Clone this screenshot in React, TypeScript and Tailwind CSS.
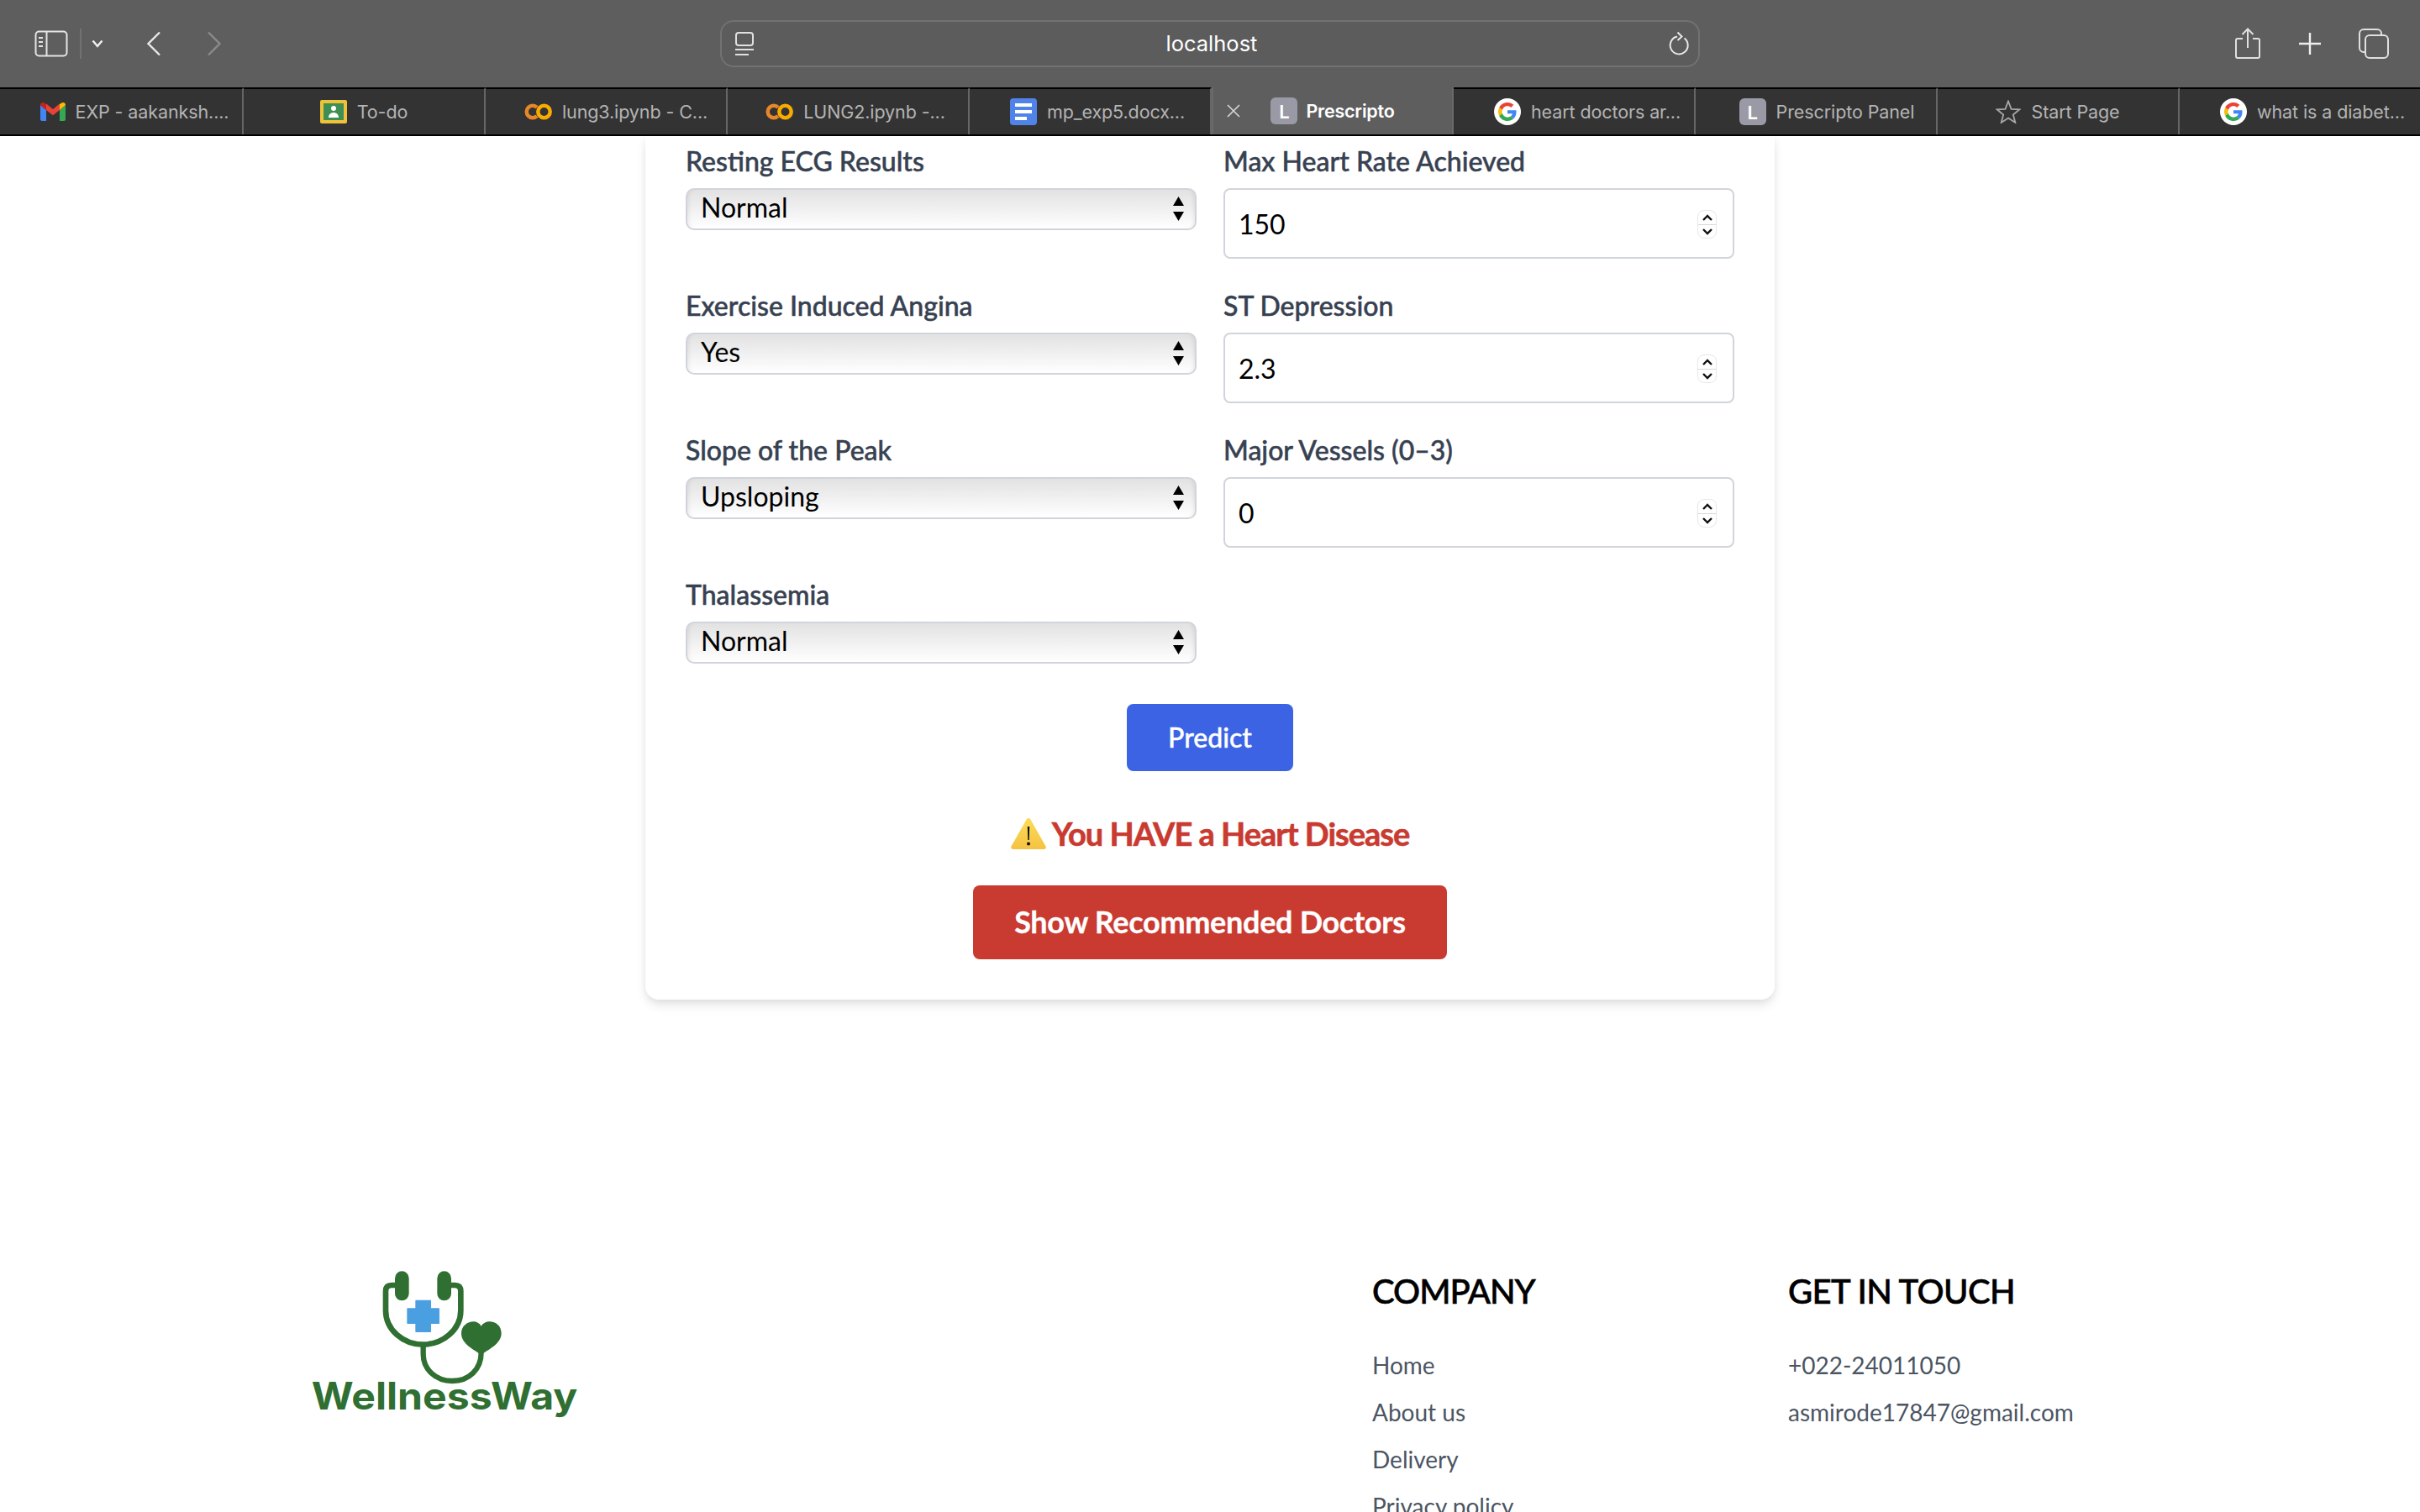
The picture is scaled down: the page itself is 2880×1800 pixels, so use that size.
import React from "react";

const bodyFont = "font-['Lato','Noto_Sans',sans-serif]";

function GoogleIcon() {
  return (
    <span className="flex h-[32px] w-[32px] shrink-0 items-center justify-center rounded-full bg-white">
      <svg viewBox="0 0 48 48" className="h-[22px] w-[22px]">
        <path fill="#EA4335" d="M24 9.5c3.54 0 6.71 1.22 9.21 3.6l6.85-6.85C35.9 2.38 30.47 0 24 0 14.62 0 6.51 5.38 2.56 13.22l7.98 6.19C12.43 13.72 17.74 9.5 24 9.5z" />
        <path fill="#4285F4" d="M46.98 24.55c0-1.57-.15-3.09-.38-4.55H24v9.02h12.94c-.58 2.96-2.26 5.48-4.78 7.18l7.73 6c4.51-4.18 7.09-10.36 7.09-17.65z" />
        <path fill="#FBBC05" d="M10.53 28.59c-.48-1.45-.76-2.99-.76-4.59s.27-3.14.76-4.59l-7.98-6.19C.92 16.46 0 20.12 0 24c0 3.88.92 7.54 2.56 10.78l7.97-6.19z" />
        <path fill="#34A853" d="M24 48c6.48 0 11.93-2.13 15.89-5.81l-7.73-6c-2.15 1.45-4.92 2.3-8.16 2.3-6.26 0-11.57-4.22-13.47-9.91l-7.98 6.19C6.51 42.62 14.62 48 24 48z" />
      </svg>
    </span>
  );
}

function GmailIcon() {
  return (
    <svg viewBox="0 0 30 22" className="h-[22px] w-[30px] shrink-0">
      <path fill="#4285F4" d="M0 3v17a2 2 0 0 0 2 2h5V9z" />
      <path fill="#34A853" d="M30 3v17a2 2 0 0 1-2 2h-5V9z" />
      <path fill="#EA4335" d="M7 9v-7.500L15 8l8-6.500V9l-8 6.200z" />
      <path fill="#C5221F" d="M0 3c0-2.600 3-3.800 5-2.300L7 2v7z" />
      <path fill="#FBBC04" d="M30 3c0-2.600-3-3.800-5-2.300L23 2v7z" />
    </svg>
  );
}

function ColabIcon() {
  return (
    <svg viewBox="0 0 33 20" className="h-[20px] w-[33px] shrink-0" fill="none" strokeWidth="4.500">
      <circle cx="23.500" cy="10" r="7.200" stroke="#F9AB00" />
      <path d="M15 4.900a7.200 7.200 0 1 0 0 10.200" stroke="#E8862A" />
    </svg>
  );
}

function TodoIcon() {
  return (
    <svg viewBox="0 0 32 28" className="h-[28px] w-[32px] shrink-0">
      <rect width="32" height="28" rx="2" fill="#EFC23C" />
      <rect x="4" y="4" width="24" height="20" fill="#3F8F55" />
      <circle cx="16" cy="10" r="3" fill="#fff" />
      <path d="M10 21c0-4 3-6 6-6s6 2 6 6z" fill="#fff" />
    </svg>
  );
}

function DocsIcon() {
  return (
    <span className="flex h-[32px] w-[32px] shrink-0 flex-col items-start justify-center gap-[4px] rounded-[4px] bg-[#5083ea] pl-[6px]">
      <span className="h-[4px] w-[20px] bg-white" />
      <span className="h-[4px] w-[20px] bg-white" />
      <span className="h-[4px] w-[14px] bg-white" />
    </span>
  );
}

function LetterIcon() {
  return (
    <span className="flex h-[32px] w-[32px] shrink-0 items-end justify-center rounded-[6px] bg-[#9a9aa6] pb-[2px] font-['Inter',sans-serif] text-[22px] leading-[26px] font-semibold text-white">
      L
    </span>
  );
}

function StarIcon() {
  return (
    <svg viewBox="0 0 30 28" className="h-[28px] w-[30px] shrink-0" fill="none" stroke="#a8a8a8" strokeWidth="1.800">
      <path d="M15 1.500l3.600 9.300 9.900.5-7.700 6.200 2.600 9.500L15 21.600 6.600 27l2.600-9.500L1.500 11.300l9.900-.5z" />
    </svg>
  );
}

const tabs: { title: string; icon: React.ReactNode; active?: boolean; pad?: string }[] = [
  { title: "EXP - aakanksh....", icon: <GmailIcon />, pad: "pl-[32px]" },
  { title: "To-do", icon: <TodoIcon /> },
  { title: "lung3.ipynb - C...", icon: <ColabIcon />, pad: "pl-[24px]" },
  { title: "LUNG2.ipynb -...", icon: <ColabIcon />, pad: "pl-[18px]" },
  { title: "mp_exp5.docx...", icon: <DocsIcon />, pad: "pl-[18px]" },
  { title: "Prescripto", icon: <LetterIcon />, active: true },
  { title: "heart doctors ar...", icon: <GoogleIcon />, pad: "pl-[32px]" },
  { title: "Prescripto Panel", icon: <LetterIcon />, pad: "pl-[26px]" },
  { title: "Start Page", icon: <StarIcon /> },
  { title: "what is a diabet...", icon: <GoogleIcon />, pad: "pl-[30px]" },
];

function BrowserChrome() {
  return (
    <header className="shrink-0 font-['Inter',sans-serif]">
      <div className="relative flex h-[104px] items-center bg-[#5e5e5e]">
        <svg viewBox="0 0 40 32" className="ml-[41px] h-[32px] w-[40px]" fill="none" stroke="#e4e4e4" strokeWidth="2">
          <rect x="1.500" y="1.500" width="37" height="29" rx="4" />
          <path d="M14.500 2v28M5 9h5M5 14h5M5 19h5" />
        </svg>
        <span className="ml-[14px] h-[36px] w-[2px] bg-[#727272]" />
        <svg viewBox="0 0 14 10" className="ml-[12px] h-[10px] w-[14px]" fill="none" stroke="#f2f2f2" strokeWidth="2.400">
          <path d="M1.500 1.500L7 8l5.500-6.500" />
        </svg>
        <svg viewBox="0 0 18 30" className="ml-[51px] h-[30px] w-[18px]" fill="none" stroke="#e8e8e8" strokeWidth="2.400">
          <path d="M16 1.500L2.500 15 16 28.500" />
        </svg>
        <svg viewBox="0 0 18 30" className="ml-[54px] h-[30px] w-[18px]" fill="none" stroke="#8a8a8a" strokeWidth="2.400">
          <path d="M2 1.500L15.500 15 2 28.500" />
        </svg>
        <div className="ml-[593px] flex h-[56px] w-[1166px] items-center rounded-[16px] border-2 border-[#727272] bg-[#5c5c5c] pr-[9px] pl-[15px]">
          <svg viewBox="0 0 24 30" className="h-[30px] w-[24px]" fill="none" stroke="#e0e0e0" strokeWidth="2">
            <rect x="2" y="2" width="20" height="15" rx="3" />
            <path d="M1 22h22M1 28h16" />
          </svg>
          <span className="flex-1 text-center text-[25.500px] leading-none text-white">localhost</span>
          <svg viewBox="0 0 26 30" className="h-[30px] w-[26px]" fill="none" stroke="#e8e8e8" strokeWidth="2">
            <path d="M18.500 8.500A10.500 10.500 0 1 1 10 6.600" />
            <path d="M10.500 1.500l5 5-5 4.500" />
          </svg>
        </div>
        <svg viewBox="0 0 30 38" className="ml-[637px] h-[38px] w-[30px]" fill="none" stroke="#e0e0e0" strokeWidth="2">
          <path d="M9 13H3a2 2 0 0 0-2 2v19a2 2 0 0 0 2 2h24a2 2 0 0 0 2-2V15a2 2 0 0 0-2-2h-6" />
          <path d="M15 24V2M8.500 8L15 1.500 21.500 8" />
        </svg>
        <svg viewBox="0 0 28 28" className="ml-[45px] h-[28px] w-[28px]" fill="none" stroke="#eeeeee" strokeWidth="2.400">
          <path d="M14 1v26M1 14h26" />
        </svg>
        <svg viewBox="0 0 36 36" className="ml-[44px] h-[36px] w-[36px]" fill="none" stroke="#e0e0e0" strokeWidth="2">
          <rect x="8" y="8" width="27" height="27" rx="5" />
          <path d="M8 28H6a5 5 0 0 1-5-5V6a5 5 0 0 1 5-5h16a5 5 0 0 1 5 5v2" />
        </svg>
      </div>
      <div className="flex h-[58px] border-b-2 border-black bg-[#333333]">
        {tabs.map((t) => (
          <div
            key={t.title}
            className={
              t.active
                ? "relative flex w-[288px] items-center justify-center gap-[10px] border-r-2 border-l-2 border-[#6a6a6a] bg-[#5e5e5e] text-[21.500px] font-semibold tracking-[-0.2px] text-white"
                : `flex w-[288px] items-center justify-center gap-[12px] border-t-2 border-r-2 border-black border-r-[#666666] text-[21.500px] tracking-[-0.1px] text-[#b4b4b4] first:w-[290px] last:w-[286px] last:border-r-0 ${t.pad ?? ""}`
            }
          >
            {t.active ? (
              <svg viewBox="0 0 16 16" className="absolute top-[20px] left-[16px] h-[16px] w-[16px]" fill="none" stroke="#d8d8d8" strokeWidth="1.600">
                <path d="M1 1l14 14M15 1L1 15" />
              </svg>
            ) : null}
            {t.icon}
            <span className="whitespace-nowrap">{t.title}</span>
          </div>
        ))}
      </div>
    </header>
  );
}

function Label({ children }: { children: React.ReactNode }) {
  return <label className="mb-[8px] block text-[32px] leading-[48px] font-medium text-[#374151] [-webkit-text-stroke:0.5px_#374151]">{children}</label>;
}

function SelectField({ label, value }: { label: string; value: string }) {
  return (
    <div>
      <Label>{label}</Label>
      <div className="relative">
        <select
          defaultValue={value}
          className="block h-[50px] w-full appearance-none rounded-[10px] border-2 border-[#d1d5db] bg-gradient-to-b from-[#e2e2e2] to-[#ffffff] pb-[4px] pl-[16px] text-[32px] leading-[40px] text-black shadow-[inset_6px_0_6px_-6px_rgba(0,0,0,0.12),inset_-6px_0_6px_-6px_rgba(0,0,0,0.12)]"
        >
          <option>{value}</option>
        </select>
        <svg viewBox="0 0 14 30" className="pointer-events-none absolute top-[10px] right-[14px] h-[30px] w-[15px]">
          <path d="M7 0l6.500 11H.5zM7 29l-6.500-11h13z" fill="#000" />
        </svg>
      </div>
    </div>
  );
}

function NumberField({ label, value }: { label: string; value: string }) {
  return (
    <div>
      <Label>{label}</Label>
      <div className="relative">
        <input
          type="text"
          readOnly
          defaultValue={value}
          className="block h-[84px] w-full rounded-[8px] border-2 border-[#d1d5db] bg-white pl-[16px] text-[32px] text-black outline-none"
        />
        <span className="absolute top-[26px] right-[21px] flex h-[34px] w-[23px] flex-col items-center justify-center gap-[4px] rounded-[8px] border border-[#e5e7eb] bg-white">
          <svg viewBox="0 0 12 8" className="h-[8px] w-[12px]" fill="none" stroke="#111" strokeWidth="2.400">
            <path d="M1 7l5-5 5 5" />
          </svg>
          <span className="h-px w-full bg-[#d8d8d8]" />
          <svg viewBox="0 0 12 8" className="h-[8px] w-[12px]" fill="none" stroke="#111" strokeWidth="2.400">
            <path d="M1 1l5 5 5-5" />
          </svg>
        </span>
      </div>
    </div>
  );
}

function WarningIcon() {
  return (
    <svg viewBox="0 0 42 37" className="h-[37px] w-[42px] shrink-0">
      <defs>
        <linearGradient id="warn" x1="0" y1="0" x2="0" y2="1">
          <stop offset="0" stopColor="#fbdc58" />
          <stop offset="1" stopColor="#f5c242" />
        </linearGradient>
      </defs>
      <path d="M21 0c1 0 1.800.5 2.400 1.500L41.500 33.500c.9 1.800 0 3.500-2 3.500H2.500c-2 0-2.900-1.700-2-3.500L18.600 1.500C19.200.5 20 0 21 0z" fill="url(#warn)" />
      <path d="M19.800 10h2.400l-.5 16h-1.400z" fill="#111" />
      <circle cx="21" cy="30.500" r="2" fill="#111" />
    </svg>
  );
}

function PredictForm() {
  return (
    <div className="mx-auto w-[1344px] rounded-b-[16px] bg-white px-[48px] pt-[6px] pb-[48px] shadow-[0_8px_14px_-2px_rgba(0,0,0,0.1),0_2px_8px_0_rgba(0,0,0,0.06)]">
      <div className="grid grid-cols-2 items-start gap-x-[32px] gap-y-[32px]">
        <SelectField label="Resting ECG Results" value="Normal" />
        <NumberField label="Max Heart Rate Achieved" value="150" />
        <SelectField label="Exercise Induced Angina" value="Yes" />
        <NumberField label="ST Depression" value="2.3" />
        <SelectField label="Slope of the Peak" value="Upsloping" />
        <NumberField label="Major Vessels (0–3)" value="0" />
        <SelectField label="Thalassemia" value="Normal" />
      </div>
      <div className="mt-[48px] flex justify-center">
        <button type="button" className="h-[80px] w-[198px] rounded-[8px] bg-[#3b63e4] text-[32px] font-medium text-white [-webkit-text-stroke:0.4px_#ffffff]">
          Predict
        </button>
      </div>
      <div className="mt-[48px] flex h-[56px] items-center justify-center gap-[7px] pb-[4px] text-[38px] leading-[52px] font-bold tracking-[-1px] text-[#c93a31] [-webkit-text-stroke:0.6px_#c93a31]">
        <WarningIcon />
        <span>You HAVE a Heart Disease</span>
      </div>
      <div className="mt-[32px] flex justify-center">
        <button type="button" className="h-[88px] w-[564px] rounded-[8px] bg-[#c93a31] pb-[2px] text-[36px] font-bold tracking-[-0.3px] text-white [-webkit-text-stroke:0.3px_#ffffff]">
          Show Recommended Doctors
        </button>
      </div>
    </div>
  );
}

function Logo() {
  return (
    <svg viewBox="0 0 1146 720" className="h-[240px] w-[382px]" fill="none">
      <rect x="390" y="100" width="50" height="105" rx="25" fill="#306f32" />
      <rect x="541" y="100" width="50" height="105" rx="25" fill="#306f32" />
      <path d="M392 150H378Q357 150 357 171V240C357 310 420 362 490 362C560 362 625 310 625 240V171Q625 150 604 150H590" stroke="#306f32" strokeWidth="20" />
      <path d="M491 365V395C491 450 535 492 595 492C655 492 698 450 698 390" stroke="#306f32" strokeWidth="19" />
      <path d="M698 398C660 375 627 355 627 322C627 295 650 280 670 280C682 280 692 286 698 296C704 286 716 280 728 280C750 280 770 295 770 322C770 355 735 375 698 398Z" fill="#306f32" />
      <path d="M465 205H517V234H547V286H517V316H465V286H435V234H465Z" fill="#4a9fe0" stroke="#4a9fe0" strokeWidth="4" strokeLinejoin="round" />
      <text x="92" y="595" fontFamily="Inter, sans-serif" fontWeight="700" fontSize="134" fill="#306f32" textLength="950" lengthAdjust="spacingAndGlyphs">
        WellnessWay
      </text>
    </svg>
  );
}

function Footer() {
  return (
    <footer className="mt-[290px] grid shrink-0 grid-cols-[1293px_495px_1fr] pl-[340px]">
      <Logo />
      <div className="pt-[29px]">
        <h3 className="mb-[36px] text-[40px] leading-[56px] font-medium tracking-[-1px] text-black [-webkit-text-stroke:0.6px_#000000]">COMPANY</h3>
        <ul className="flex flex-col gap-[8px] text-[28px] leading-[48px] text-[#4b5563]">
          <li>Home</li>
          <li>About us</li>
          <li>Delivery</li>
          <li>Privacy policy</li>
        </ul>
      </div>
      <div className="pt-[29px]">
        <h3 className="mb-[36px] text-[40px] leading-[56px] font-medium tracking-[-0.6px] text-black [-webkit-text-stroke:0.6px_#000000]">GET IN TOUCH</h3>
        <ul className="flex flex-col gap-[8px] text-[28px] leading-[48px] text-[#4b5563]">
          <li>+022-24011050</li>
          <li>asmirode17847@gmail.com</li>
        </ul>
      </div>
    </footer>
  );
}

export default function App() {
  return (
    <div className={`flex h-[1800px] flex-col overflow-hidden bg-white ${bodyFont}`}>
      <BrowserChrome />
      <PredictForm />
      <Footer />
    </div>
  );
}
